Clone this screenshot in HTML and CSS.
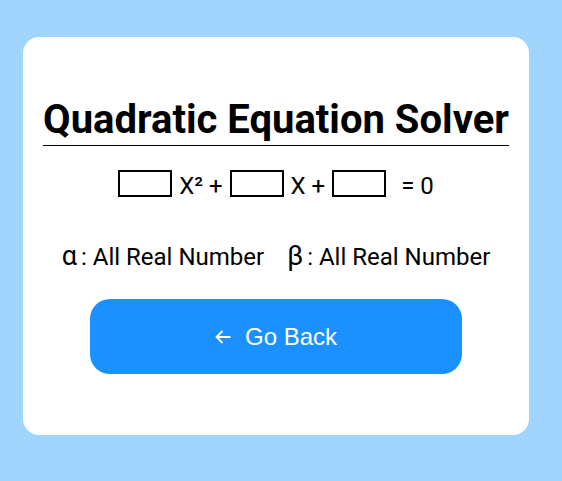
FILE: index.html
```html
<!DOCTYPE html>
<html>
<head>
<meta charset="utf-8">
<link rel="stylesheet" href="styles.css">
</head>
<body>
<main class="card">
  <h1 class="title">Quadratic Equation Solver</h1>
  <div class="equation">
    <input class="coef" type="text">
    <span class="term">X² +</span>
    <input class="coef" type="text">
    <span class="term">X +</span>
    <input class="coef" type="text">
    <span class="term eq">= 0</span>
  </div>
  <div class="roots">
    <span class="root"><span class="sym">α</span>: All Real Number</span>
    <span class="root"><span class="sym">β</span>: All Real Number</span>
  </div>
  <button class="back" type="button">
    <svg class="arrow" width="16" height="14" viewBox="0 0 16 14"><path d="M15.5 7H1.5M7.5 1L1.5 7l6 6" fill="none" stroke="#fff" stroke-width="1.8"/></svg>
    <span>Go Back</span>
  </button>
</main>
</body>
</html>
```
FILE: styles.css
```css
html, body {
  margin: 0;
  padding: 0;
}
body {
  background: #a0d6fd;
  height: 481px;
  box-sizing: border-box;
  padding: 37px 33px 0 23px;
  font-family: Roboto, "Liberation Sans", sans-serif;
}
.card {
  background: #fff;
  border-radius: 16px;
  height: 398px;
  box-sizing: border-box;
  padding-top: 61px;
  display: flex;
  flex-direction: column;
  align-items: center;
}
.title {
  margin: 0;
  font-size: 40px;
  font-weight: 700;
  color: #000;
  line-height: 44px;
  padding-bottom: 3px;
  border-bottom: 1px solid #000;
}
.equation {
  margin-top: 24px;
  display: flex;
  align-items: flex-end;
  gap: 7px;
  font-size: 24px;
  line-height: 22px;
  color: #000;
  white-space: nowrap;
}
.coef {
  width: 54px;
  height: 27px;
  box-sizing: border-box;
  border: 2px solid #000;
  border-radius: 0;
  padding: 0;
  margin: 0;
  background: #fff;
}
.term {
  display: block;
}
.eq {
  margin-left: 8px;
}
.roots {
  margin-top: 45px;
  display: flex;
  align-items: baseline;
  gap: 23px;
  font-size: 24px;
  line-height: 28px;
  color: #000;
}
.sym {
  font-size: 27px;
  line-height: 28px;
  margin-right: 4px;
}
.back {
  margin-top: 28px;
  width: 372px;
  height: 75px;
  border: none;
  border-radius: 20px;
  background: #1a91ff;
  color: #fff;
  font-family: "Liberation Sans", Arial, sans-serif;
  font-size: 24px;
  display: flex;
  align-items: center;
  justify-content: center;
  gap: 14px;
  padding: 0;
}
.arrow {
  display: block;
}
```
